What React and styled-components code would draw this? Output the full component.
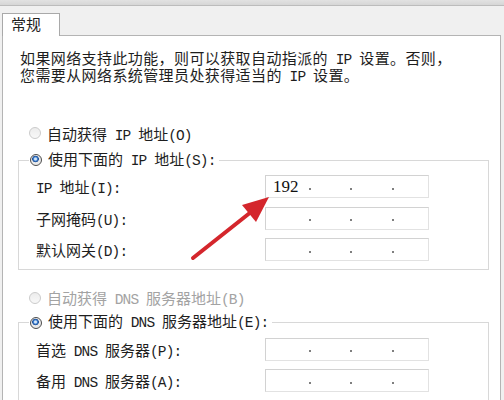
import React from "react";
import styled, { createGlobalStyle } from "styled-components";

const GlobalStyle = createGlobalStyle`
  html, body {
    margin: 0;
    padding: 0;
    background: #f0f0f0;
    overflow: hidden;
  }
  * {
    box-sizing: border-box;
  }
`;

const UI_FONT = `"Liberation Serif", "Noto Sans CJK SC", serif`;

function App() {
  return (
    <>
      <GlobalStyle />
      <Window>
        <TopStrip />
        <TabBar>
          <Tab>常规</Tab>
        </TabBar>
        <Panel>
          <Para>
            如果网络支持此功能，则可以获取自动指派的<Lat> IP </Lat>设置。否则，
            <br />
            您需要从网络系统管理员处获得适当的<Lat> IP </Lat>设置。
          </Para>

          <RadioRow top={36}>
            <Radio />
            <span>
              自动获得<Lat> IP </Lat>地址<Lat>(O)</Lat>
            </span>
          </RadioRow>
          <Group top={4}>
            <Legend>
              <Radio checked />
              <span>
                使用下面的<Lat> IP </Lat>地址<Lat>(S):</Lat>
              </span>
            </Legend>
            <FieldRow>
              <Label>
                <Lat>IP </Lat>地址<Lat>(I):</Lat>
              </Label>
              <IpField value="192" />
            </FieldRow>
            <FieldRow>
              <Label>
                子网掩码<Lat>(U):</Lat>
              </Label>
              <IpField />
            </FieldRow>
            <FieldRow>
              <Label>
                默认网关<Lat>(D):</Lat>
              </Label>
              <IpField />
            </FieldRow>
          </Group>

          <RadioRow top={16} disabled>
            <Radio />
            <span>
              自动获得<Lat> DNS </Lat>服务器地址<Lat>(B)</Lat>
            </span>
          </RadioRow>
          <Group top={2}>
            <Legend>
              <Radio checked />
              <span>
                使用下面的<Lat> DNS </Lat>服务器地址<Lat>(E):</Lat>
              </span>
            </Legend>
            <FieldRow>
              <Label>
                首选<Lat> DNS </Lat>服务器<Lat>(P):</Lat>
              </Label>
              <IpField />
            </FieldRow>
            <FieldRow>
              <Label>
                备用<Lat> DNS </Lat>服务器<Lat>(A):</Lat>
              </Label>
              <IpField />
            </FieldRow>
          </Group>
        </Panel>

        <Arrow viewBox="0 0 504 400" width="504" height="400">
          <line x1="193" y1="258" x2="251" y2="212" stroke="#d4262c" strokeWidth="4" strokeLinecap="round" />
          <polygon points="269,197 256,222 242,205" fill="#d4262c" />
        </Arrow>
      </Window>
    </>
  );
}

function IpField({ value }) {
  return (
    <IpBox>
      <Seg w={42}>{value}</Seg>
      <Dot />
      <Seg w={37} />
      <Dot />
      <Seg w={38} />
      <Dot />
      <Seg />
    </IpBox>
  );
}

//styled components
const Window = styled.div`
  position: relative;
  width: 504px;
  height: 400px;
  overflow: hidden;
  background: #f0f0f0;
  font-family: ${UI_FONT};
  color: #1e1e1e;
`;

const TopStrip = styled.div`
  height: 6px;
  background: linear-gradient(#e2e2e2, #d6d6d6);
  border-bottom: 1px solid #bcbcbc;
`;

const TabBar = styled.div`
  display: flex;
  align-items: flex-end;
  height: 29px;
  padding-left: 2px;
`;

const Tab = styled.div`
  position: relative;
  z-index: 1;
  width: 58px;
  height: 23px;
  margin-bottom: -1px;
  padding: 2px 0 0 8px;
  background: #fff;
  border: 1px solid #a9a9a9;
  border-bottom: none;
  font-size: 15px;
  line-height: 18px;
`;

const Panel = styled.div`
  width: 499px;
  height: 380px;
  margin-left: 2px;
  background: #fff;
  border: 1px solid #b4b4b4;
`;

// half-width latin run, like the ascii cells of a CJK system font
const Lat = styled.span`
  font-family: "Liberation Mono", monospace;
  font-size: 14.5px;
  letter-spacing: -0.9px;
  white-space: pre;
`;

const Para = styled.p`
  margin: 15px 0 0 17px;
  font-size: 15px;
  line-height: 16px;
  letter-spacing: 0.4px;
  white-space: nowrap;
`;

const RadioRow = styled.div`
  display: flex;
  align-items: center;
  gap: 6px;
  height: 24px;
  margin-top: ${(p) => p.top}px;
  padding-left: 26px;
  font-size: 15px;
  color: ${(p) => (p.disabled ? "#a3a3a3" : "#1e1e1e")};
`;

const Radio = styled.span`
  display: inline-flex;
  flex: none;
  width: 12px;
  height: 12px;
  border-radius: 50%;
  border: 1px solid ${(p) => (p.checked ? "#4d4d4d" : "#cbcbcb")};
  background: ${(p) =>
    p.checked
      ? "radial-gradient(circle at 45% 40%, #d6e6f7 0 1px, #3f82d2 2px, #1c4c93 3px, #e9e9e9 3.6px)"
      : "linear-gradient(#ececec, #f8f8f8)"};
`;

const Group = styled.fieldset`
  margin: ${(p) => p.top}px 11px 0 15px;
  padding: 0 0 3px 0;
  border: 1px solid #d8d8d8;
`;

const Legend = styled.legend`
  display: flex;
  align-items: center;
  gap: 6px;
  height: 22px;
  margin-left: 10px;
  padding: 0 4px 0 1px;
  font-size: 15px;
  line-height: 22px;
`;

const FieldRow = styled.div`
  display: flex;
  align-items: center;
  height: 31.5px;
  padding-left: 17px;
`;

const Label = styled.span`
  flex: none;
  width: 229px;
  font-size: 15px;
`;

const IpBox = styled.div`
  display: flex;
  align-items: center;
  width: 164px;
  height: 23px;
  background: #fff;
  border: 1px solid #d2d2d2;
  border-right-color: #e2e2e2;
  border-bottom-color: #e2e2e2;
`;

const Seg = styled.span`
  flex: ${(p) => (p.w ? `0 0 ${p.w}px` : "1")};
  padding-left: 7px;
  font-size: 17px;
  line-height: 20px;
  color: #111;
`;

const Dot = styled.span`
  flex: none;
  width: 2px;
  height: 2px;
  margin: 4px 1px 0;
  background: #555;
  border-radius: 1px;
`;

const Arrow = styled.svg`
  position: absolute;
  left: 0;
  top: 0;
  pointer-events: none;
`;

export default App;
